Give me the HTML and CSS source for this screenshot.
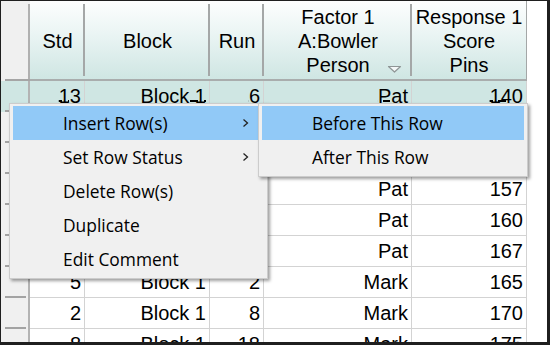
FILE: index.html
```html
<!DOCTYPE html>
<html>
<head>
<meta charset="utf-8">
<link rel="stylesheet" href="styles.css">
</head>
<body>
<div class="frame">
  <div class="grid">
    <div class="hc corner"></div>
    <div class="hc">Std</div>
    <div class="hc">Block</div>
    <div class="hc">Run</div>
    <div class="hc factor">Factor 1<br>A:Bowler<br>Person<svg class="sort" width="15" height="8" viewBox="0 0 15 8"><path d="M1.5 1.5 H13.5 L7.5 7 Z" fill="#f4f8f8" stroke="#8f9696" stroke-width="1.2" stroke-linejoin="round"/></svg></div>
    <div class="hc last">Response 1<br>Score<br>Pins</div>

    <div class="rh sel"></div>
    <div class="c sel"><span>13</span></div><div class="c sel"><span>Block 1</span></div><div class="c sel"><span>6</span></div><div class="c sel"><span>Pat</span></div><div class="c sel"><span>140</span></div>

    <div class="rh"></div>
    <div class="c">4</div><div class="c">Block 1</div><div class="c">3</div><div class="c">Pat</div><div class="c">152</div>

    <div class="rh"></div>
    <div class="c">16</div><div class="c">Block 1</div><div class="c">11</div><div class="c">Pat</div><div class="c">149</div>

    <div class="rh"></div>
    <div class="c">7</div><div class="c">Block 1</div><div class="c">15</div><div class="c">Pat</div><div class="c">157</div>

    <div class="rh"></div>
    <div class="c">10</div><div class="c">Block 1</div><div class="c">4</div><div class="c">Pat</div><div class="c">160</div>

    <div class="rh"></div>
    <div class="c">1</div><div class="c">Block 1</div><div class="c">9</div><div class="c">Pat</div><div class="c">167</div>

    <div class="rh"></div>
    <div class="c">5</div><div class="c">Block 1</div><div class="c">2</div><div class="c">Mark</div><div class="c">165</div>

    <div class="rh"></div>
    <div class="c">2</div><div class="c">Block 1</div><div class="c">8</div><div class="c">Mark</div><div class="c">170</div>

    <div class="rh"></div>
    <div class="c">8</div><div class="c">Block 1</div><div class="c">18</div><div class="c">Mark</div><div class="c">175</div>
  </div>

  <div class="menu main">
    <div class="item hl"><span>Insert Row(s)</span><svg class="chev" width="7" height="10" viewBox="0 0 7 10"><path d="M1.5 1.5 L5.5 5 L1.5 8.5" fill="none" stroke="#222" stroke-width="1.3"/></svg></div>
    <div class="item"><span>Set Row Status</span><svg class="chev" width="7" height="10" viewBox="0 0 7 10"><path d="M1.5 1.5 L5.5 5 L1.5 8.5" fill="none" stroke="#222" stroke-width="1.3"/></svg></div>
    <div class="item"><span>Delete Row(s)</span></div>
    <div class="item"><span>Duplicate</span></div>
    <div class="item"><span>Edit Comment</span></div>
  </div>

  <div class="menu sub">
    <div class="item hl"><span>Before This Row</span></div>
    <div class="item"><span>After This Row</span></div>
  </div>
</div>
</body>
</html>
```

FILE: styles.css
```css
html, body {
  margin: 0;
  padding: 0;
  background: #ffffff;
}

body {
  width: 550px;
  height: 345px;
  overflow: hidden;
}

.frame {
  position: relative;
  width: 550px;
  height: 345px;
  box-sizing: border-box;
  border-style: solid;
  border-color: #1f1f1f;
  border-width: 1px 3px 3px 1px;
  background: #ffffff;
  overflow: hidden;
  font-family: "Liberation Sans", Arial, sans-serif;
  color: #000;
}

.grid {
  display: grid;
  grid-template-columns: 29px 55px 125px 54px 148px 115px;
  grid-template-rows: 80px;
  grid-auto-rows: 31px;
  width: 526px;
}

.hc {
  position: relative;
  box-sizing: border-box;
  display: flex;
  align-items: center;
  justify-content: center;
  text-align: center;
  font-size: 20px;
  line-height: 24px;
  padding-top: 1px;
  border-bottom: 2px solid #a9adad;
  background:
    linear-gradient(#a4a7a7, #a4a7a7) right top 3px / 2px 72px no-repeat,
    linear-gradient(#fdfefe 0%, #e9f4f3 45%, #cfe6e3 100%);
}

.hc.last {
  border-right: 1px solid #a4a7a7;
  background: linear-gradient(#fdfefe 0%, #e9f4f3 45%, #cfe6e3 100%);
}

.hc.corner {
  border-bottom: none;
  background:
    linear-gradient(#a5a5a5, #a5a5a5) left 4px bottom / 25px 2px no-repeat,
    linear-gradient(#b0b0b0, #b0b0b0) right top 3px / 2px 80px no-repeat,
    #f0f0f0;
}

.sort {
  position: absolute;
  left: 123px;
  top: 64px;
}

.rh {
  box-sizing: border-box;
  border-right: 2px solid #b3b3b3;
  background:
    linear-gradient(#a3a3a3, #a3a3a3) left 4px bottom / 21px 2px no-repeat,
    #f0f0f0;
}

.rh.sel {
  background:
    linear-gradient(#a3a3a3, #a3a3a3) left 4px bottom / 21px 2px no-repeat,
    #cfe6e3;
}

.c {
  box-sizing: border-box;
  border-right: 1px solid #d3d3d3;
  border-bottom: 1px solid #d3d3d3;
  text-align: right;
  padding-right: 3px;
  font-size: 20px;
  line-height: 30px;
  white-space: nowrap;
  overflow: hidden;
  background: #ffffff;
}

.c.sel {
  background: #cfe6e3;
}

.c.sel span {
  text-decoration: underline;
  text-decoration-thickness: 1.5px;
  text-underline-offset: -3px;
}

.menu {
  position: absolute;
  top: 102px;
  box-sizing: border-box;
  padding: 2px 3px;
  background: #f0f0f0;
  border: 1px solid #cccccc;
  box-shadow: 2px 2px 3px rgba(0, 0, 0, 0.38);
  font-family: "Segoe UI", "Open Sans", sans-serif;
  font-size: 17.4px;
  color: #000;
}

.menu.main {
  left: 8px;
  width: 259px;
  z-index: 1;
}

.menu.sub {
  left: 257px;
  width: 270px;
  z-index: 2;
}

.item {
  display: flex;
  align-items: center;
  justify-content: space-between;
  height: 34px;
  padding: 0 15px 0 50px;
  white-space: nowrap;
}

.item.hl {
  background: #91c9f7;
}

.chev {
  display: block;
}
```
